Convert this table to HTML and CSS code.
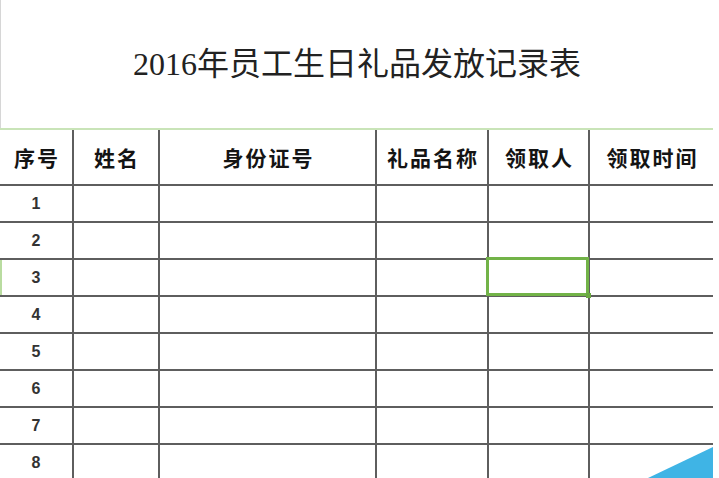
FILE: index.html
```html
<!DOCTYPE html>
<html lang="zh-CN">
<head>
<meta charset="utf-8">
<title>2016年员工生日礼品发放记录表</title>
<link rel="stylesheet" href="styles.css">
</head>
<body>
<div class="page">
  <div class="title-area">
    <h1 class="title">2016年员工生日礼品发放记录表</h1>
  </div>
  <div class="sheet">
    <div class="cell head">序号</div>
    <div class="cell head">姓名</div>
    <div class="cell head">身份证号</div>
    <div class="cell head">礼品名称</div>
    <div class="cell head">领取人</div>
    <div class="cell head last">领取时间</div>

    <div class="cell num">1</div><div class="cell"></div><div class="cell"></div><div class="cell"></div><div class="cell"></div><div class="cell last"></div>
    <div class="cell num">2</div><div class="cell"></div><div class="cell"></div><div class="cell"></div><div class="cell"></div><div class="cell last"></div>
    <div class="cell num active-row">3</div><div class="cell"></div><div class="cell"></div><div class="cell"></div><div class="cell selected"></div><div class="cell last"></div>
    <div class="cell num">4</div><div class="cell"></div><div class="cell"></div><div class="cell"></div><div class="cell"></div><div class="cell last"></div>
    <div class="cell num">5</div><div class="cell"></div><div class="cell"></div><div class="cell"></div><div class="cell"></div><div class="cell last"></div>
    <div class="cell num">6</div><div class="cell"></div><div class="cell"></div><div class="cell"></div><div class="cell"></div><div class="cell last"></div>
    <div class="cell num">7</div><div class="cell"></div><div class="cell"></div><div class="cell"></div><div class="cell"></div><div class="cell last"></div>
    <div class="cell num">8</div><div class="cell"></div><div class="cell"></div><div class="cell"></div><div class="cell"></div><div class="cell last"></div>
  </div>
  <svg class="corner" width="719" height="478" viewBox="0 0 719 478" aria-hidden="true">
    <polygon points="648,478 713,447 713,478" fill="#3fb4e5"/>
  </svg>
</div>
</body>
</html>
```
FILE: styles.css
```css
html, body {
  margin: 0;
  padding: 0;
  background: #ffffff;
}
body {
  width: 719px;
  height: 478px;
  overflow: hidden;
}
.page {
  position: relative;
  width: 719px;
  height: 478px;
  overflow: hidden;
}
.title-area {
  width: 713px;
  height: 128px;
  display: flex;
  align-items: center;
  justify-content: center;
  box-sizing: border-box;
  border-left: 1px solid #d6d6d6;
}
.title {
  margin: 0;
  font-family: "Liberation Serif", "Noto Sans CJK SC", serif;
  font-weight: normal;
  font-size: 32px;
  color: #222222;
  line-height: 1;
}
.sheet {
  width: 713px;
  display: grid;
  grid-template-columns: 74px 86px 217px 112px 101px 123px;
  grid-template-rows: 56px repeat(8, 37px);
  border-top: 2px solid #c9e4b8;
}
.cell {
  box-sizing: border-box;
  border-right: 2px solid #5e5e5e;
  border-bottom: 2px solid #5e5e5e;
  display: flex;
  align-items: center;
  justify-content: center;
  position: relative;
}
.cell.last {
  border-right: none;
}
.head {
  font-family: "Noto Sans CJK SC", sans-serif;
  font-weight: bold;
  font-size: 21px;
  letter-spacing: 2px;
  padding-left: 2px;
  color: #141414;
}
.num {
  font-family: "Liberation Sans", Arial, sans-serif;
  font-weight: bold;
  font-size: 16px;
  color: #333333;
}
.active-row {
  box-shadow: inset 2px 0 0 #b9dca0;
}
.selected::after {
  content: "";
  position: absolute;
  left: -3px;
  right: -1px;
  top: -3px;
  bottom: -1px;
  border: 3px solid #72b348;
}
.selected::before {
  content: "";
  position: absolute;
  right: -3px;
  bottom: -3px;
  width: 5px;
  height: 5px;
  background: #6aa842;
  z-index: 1;
}
.corner {
  position: absolute;
  left: 0;
  top: 0;
  pointer-events: none;
}
```
